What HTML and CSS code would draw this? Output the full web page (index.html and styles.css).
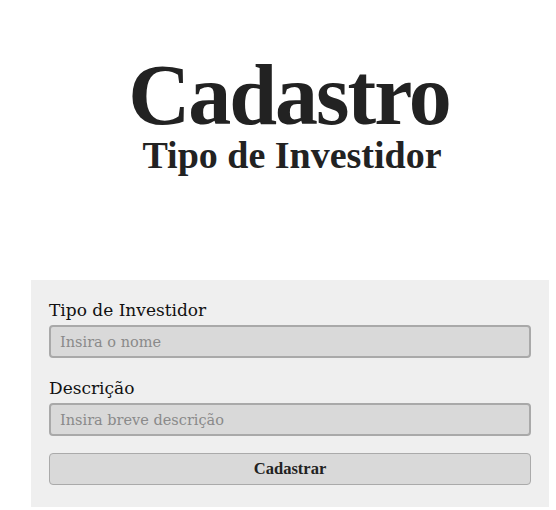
FILE: index.html
```html
<!DOCTYPE html>
<html lang="pt">
<head>
<meta charset="utf-8">
<link rel="stylesheet" href="styles.css">
</head>
<body>
<header class="hero">
  <h1 class="title">Cadastro</h1>
  <h2 class="subtitle">Tipo de Investidor</h2>
</header>
<form class="panel">
  <label class="label" for="nome">Tipo de Investidor</label>
  <input class="field" id="nome" type="text" placeholder="Insira o nome">
  <label class="label" for="desc">Descrição</label>
  <input class="field" id="desc" type="text" placeholder="Insira breve descrição">
  <button class="btn" type="button">Cadastrar</button>
</form>
</body>
</html>
```

FILE: styles.css
```css
html, body {
  margin: 0;
  padding: 0;
  background: #ffffff;
  font-family: "DejaVu Serif", serif;
  color: #222222;
}
.hero {
  display: flex;
  flex-direction: column;
  align-items: center;
  padding-top: 55px;
  height: 234px;
  box-sizing: border-box;
}
.title {
  margin: 0 0 0 22px;
  font-family: "Liberation Serif", "DejaVu Serif", serif;
  font-size: 86px;
  line-height: 80px;
  font-weight: bold;
  letter-spacing: -2px;
  color: #222222;
}
.subtitle {
  margin: 0 0 0 28px;
  font-family: "Liberation Serif", "DejaVu Serif", serif;
  font-size: 38px;
  line-height: 40px;
  font-weight: bold;
  color: #222222;
}
.panel {
  margin: 46px 7px 0 31px;
  background: #efefef;
  padding: 17px 18px 22px 18px;
  display: flex;
  flex-direction: column;
}
.label {
  font-family: "DejaVu Serif", serif;
  font-size: 17px;
  line-height: 27px;
  color: #111111;
  margin-bottom: 1px;
}
.field {
  height: 33px;
  box-sizing: border-box;
  border: 2px solid #a9a9a9;
  border-radius: 4px;
  background: #d9d9d9;
  font-family: "DejaVu Serif", serif;
  font-size: 14.5px;
  padding: 0 9px;
  color: #333333;
  margin-bottom: 17px;
}
.field::placeholder {
  color: #8a8a8a;
}
.btn {
  height: 32px;
  box-sizing: border-box;
  border: 1px solid #aaaaaa;
  border-radius: 4px;
  background: #d9d9d9;
  font-family: "Liberation Serif", "DejaVu Serif", serif;
  font-size: 16.5px;
  font-weight: bold;
  color: #222222;
}
```
